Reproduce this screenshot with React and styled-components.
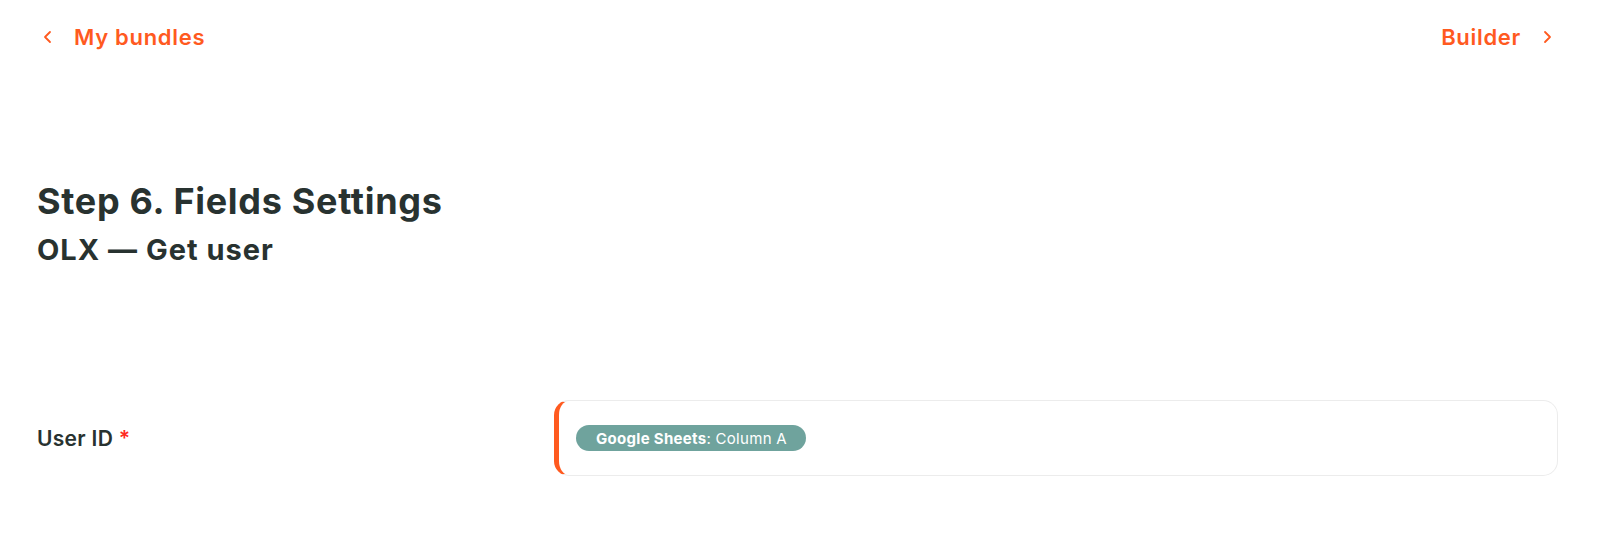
import React from "react";
import styled, { createGlobalStyle } from "styled-components";

const GlobalStyle = createGlobalStyle`
  html, body {
    margin: 0;
    padding: 0;
    background: #fff;
    font-family: Inter, "Liberation Sans", sans-serif;
  }
`;

const Chevron = ({ dir }) => (
  <svg width="10" height="14" viewBox="0 0 10 14" fill="none">
    <path
      d={dir === "left" ? "M7 2 L2 7 L7 12" : "M3 2 L8 7 L3 12"}
      stroke="#ff5a1f"
      strokeWidth="1.8"
      strokeLinecap="round"
      strokeLinejoin="round"
    />
  </svg>
);

const App = () => {
  return (
    <Page>
      <GlobalStyle />
      <TopNav>
        <NavLink href="#">
          <Chevron dir="left" />
          <span>My bundles</span>
        </NavLink>
        <NavLink href="#">
          <span>Builder</span>
          <Chevron dir="right" />
        </NavLink>
      </TopNav>

      <Titles>
        <Title>Step 6. Fields Settings</Title>
        <Subtitle>OLX — Get user</Subtitle>
      </Titles>

      <FieldRow>
        <Label>
          User ID <Required>*</Required>
        </Label>
        <InputBox>
          <Chip>
            <b>Google Sheets</b>: Column A
          </Chip>
        </InputBox>
      </FieldRow>
    </Page>
  );
};

export default App;

const Page = styled.div`
  padding: 0 42px 0 37px;
  width: 1600px;
  box-sizing: border-box;
`;

const TopNav = styled.div`
  display: flex;
  justify-content: space-between;
  align-items: center;
  height: 74px;
  padding: 0 6px;
`;

const NavLink = styled.a`
  display: flex;
  align-items: center;
  gap: 21px;
  color: #ff5a1f;
  font-size: 22px;
  font-weight: 600;
  text-decoration: none;
  letter-spacing: 0.7px;
`;

const Titles = styled.div`
  padding-top: 105px;
`;

const Title = styled.h1`
  margin: 0;
  font-size: 36px;
  line-height: 44px;
  font-weight: 700;
  letter-spacing: 0.7px;
  color: #283230;
`;

const Subtitle = styled.h2`
  margin: 9px 0 0;
  font-size: 29px;
  line-height: 36px;
  font-weight: 700;
  letter-spacing: 1px;
  color: #283230;
`;

const FieldRow = styled.div`
  display: grid;
  grid-template-columns: 517px 1fr;
  align-items: center;
  margin-top: 132px;
`;

const Label = styled.div`
  font-size: 21px;
  font-weight: 600;
  letter-spacing: 0.3px;
  color: #283230;
`;

const Required = styled.span`
  color: #ff2a1f;
`;

const InputBox = styled.div`
  height: 76px;
  box-sizing: border-box;
  border: 1px solid #ececec;
  border-left: 5px solid #ff5a1f;
  border-radius: 15px;
  display: flex;
  align-items: center;
  padding-left: 17px;
`;

const Chip = styled.span`
  display: inline-flex;
  align-items: center;
  height: 26px;
  padding: 0 19px 0 20px;
  border-radius: 13px;
  background: #6fa39d;
  color: #fff;
  font-size: 15px;
  letter-spacing: 0.3px;
  b {
    font-weight: 700;
  }
`;
